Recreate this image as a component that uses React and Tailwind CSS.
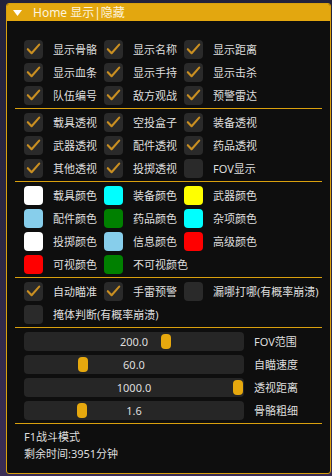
import React from "react";

const Check = () => (
  <svg viewBox="0 0 19 19" className="w-[19px] h-[19px]">
    <path d="M3.8 9.2 L7.6 13.2 L15.2 4.6" stroke="#c98f22" strokeWidth="2.1" fill="none" strokeLinecap="round" strokeLinejoin="round" />
  </svg>
);

const Item = ({ label, checked, color }) => (
  <div className="flex items-center h-[19px]">
    {color ? (
      <div className="w-[19px] h-[19px] rounded-[4px] shrink-0" style={{ background: color }} />
    ) : (
      <div className="w-[19px] h-[19px] rounded-[4px] bg-[#2a2a2a] shrink-0">{checked && <Check />}</div>
    )}
    <span className="ml-[10px] whitespace-nowrap text-[#dedede]">{label}</span>
  </div>
);

const Grid = ({ rows }) => (
  <div className="flex flex-col gap-[4px] pl-[17px]">
    {rows.map((row, i) => (
      <div key={i} className="grid grid-cols-[80px_80px_80px]">
        {row.map((it, j) => (
          <Item key={j} {...it} />
        ))}
      </div>
    ))}
  </div>
);

const Sep = () => <div className="mx-[8px] mt-[3px] mb-[4px] h-px bg-[#d9a00e]" />;

const Slider = ({ value, label, pos }) => (
  <div className="flex items-center h-[19px]">
    <div className="relative w-[220px] h-[19px] rounded-[4px] bg-[#262626] flex items-center justify-center text-[#dedede]">
      {value}
      <div className="absolute top-[2px] w-[10px] h-[15px] rounded-[4px] bg-[#e6a80e]" style={{ left: pos }} />
    </div>
    <span className="ml-[10px] text-[#dedede]">{label}</span>
  </div>
);

export default function App() {
  const s1 = [
    [{ label: "显示骨骼", checked: true }, { label: "显示名称", checked: true }, { label: "显示距离", checked: true }],
    [{ label: "显示血条", checked: true }, { label: "显示手持", checked: true }, { label: "显示击杀", checked: true }],
    [{ label: "队伍编号", checked: true }, { label: "敌方观战", checked: true }, { label: "预警雷达", checked: true }],
  ];
  const s2 = [
    [{ label: "载具透视", checked: true }, { label: "空投盒子", checked: true }, { label: "装备透视", checked: true }],
    [{ label: "武器透视", checked: true }, { label: "配件透视", checked: true }, { label: "药品透视", checked: true }],
    [{ label: "其他透视", checked: true }, { label: "投掷透视", checked: true }, { label: "FOV显示", checked: false }],
  ];
  const s3 = [
    [{ label: "载具颜色", color: "#ffffff" }, { label: "装备颜色", color: "#00ffff" }, { label: "武器颜色", color: "#ffff00" }],
    [{ label: "配件颜色", color: "#87ceeb" }, { label: "药品颜色", color: "#008000" }, { label: "杂项颜色", color: "#00ffff" }],
    [{ label: "投掷颜色", color: "#ffffff" }, { label: "信息颜色", color: "#87ceeb" }, { label: "高级颜色", color: "#ff0000" }],
    [{ label: "可视颜色", color: "#ff0000" }, { label: "不可视颜色", color: "#008000" }],
  ];
  const s4 = [
    [{ label: "自动瞄准", checked: true }, { label: "手雷预警", checked: true }, { label: "漏哪打哪(有概率崩溃)", checked: false }],
    [{ label: "掩体判断(有概率崩溃)", checked: false }],
  ];

  return (
    <div className="w-[332px] h-[476px] overflow-hidden bg-gradient-to-b from-[#23223b] via-[#2c2844] to-[#3a2d55] pt-[3px] pl-[6px] font-['Noto_Sans','Noto_Sans_CJK_SC',sans-serif] text-[11px]">
      <div className="w-[325px] h-[471px] border border-[#d9a00e] rounded-[3px] bg-[#0e0e0e] overflow-hidden">
        <div className="h-[17px] bg-[#e3a70f] flex items-center">
          <svg viewBox="0 0 9 6" className="ml-[6px] w-[9px] h-[6px]">
            <path d="M0 0 H9 L4.5 6 Z" fill="#ffffff" />
          </svg>
          <span className="ml-[11px] text-[12px] text-[#fdf3dc] leading-none">Home 显示|隐藏</span>
        </div>
        <div className="pt-[19px] leading-[19px]">
          <Grid rows={s1} />
          <Sep />
          <Grid rows={s2} />
          <Sep />
          <Grid rows={s3} />
          <Sep />
          <Grid rows={s4} />
          <Sep />
          <div className="flex flex-col gap-[4px] pl-[17px]">
            <Slider value="200.0" label="FOV范围" pos={137} />
            <Slider value="60.0" label="自瞄速度" pos={54} />
            <Slider value="1000.0" label="透视距离" pos={209} />
            <Slider value="1.6" label="骨骼粗细" pos={53} />
          </div>
          <Sep />
          <div className="pl-[17px] text-[#dedede] leading-[17px]">
            <div>F1战斗模式</div>
            <div>剩余时间:3951分钟</div>
          </div>
        </div>
      </div>
    </div>
  );
}
